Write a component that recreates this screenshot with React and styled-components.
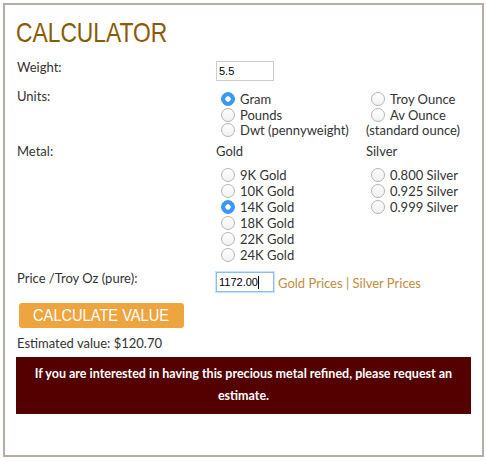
import styled, { createGlobalStyle } from "styled-components";

const COLOR = {
  text: "#333333",
  title: "#8b5a05",
  frame: "#b8ada3",
  link: "#c48b3d",
  button: "#eea53f",
  notice: "#540000",
  radioBlue: "#3a97f5",
};

const GlobalStyle = createGlobalStyle`
  body {
    margin: 0;
    background: #ffffff;
    font-family: Lato, "Open Sans", sans-serif;
    font-size: 13px;
    color: ${COLOR.text};
  }
`;

const SFrame = styled.div`
  box-sizing: border-box;
  width: 481px;
  height: 454px;
  margin: 3px 0 0 3px;
  border: 2px solid ${COLOR.frame};
  padding: 12px 11px 0 11px;
  overflow: hidden;
`;

const STitle = styled.h1`
  margin: 0 0 10px 0;
  font-family: "Liberation Sans", Arial, sans-serif;
  font-weight: normal;
  font-size: 28px;
  line-height: 32px;
  color: ${COLOR.title};
`;

const SNarrow = styled.span`
  display: inline-block;
  transform: scaleX(${(p) => p.$scale});
  transform-origin: ${(p) => p.$origin || "left"} center;
  white-space: nowrap;
`;

const SRow = styled.div`
  display: grid;
  grid-template-columns: 200px 1fr;
  margin-bottom: ${(p) => p.$gap || 0}px;
`;

const SLabel = styled.div`
  line-height: 16px;
  padding-left: 1px;
`;

const SValue = styled.div`
  padding-top: ${(p) => p.$offset || 0}px;
  display: ${(p) => (p.$flex ? "flex" : "block")};
  align-items: center;
`;

const SColumns = styled.div`
  display: grid;
  grid-template-columns: 150px 150px;
`;

const SColumnHead = styled.div`
  line-height: 16px;
  margin-bottom: 8px;
`;

const SOption = styled.label`
  display: flex;
  align-items: center;
  height: ${(p) => p.$h || 16}px;
  line-height: 16px;
`;

const SRadio = styled.input.attrs({ type: "radio" })`
  appearance: none;
  box-sizing: border-box;
  width: 14px;
  height: 14px;
  margin: 0 5px 0 5px;
  border-radius: 50%;
  border: 1px solid #b4b4b4;
  background: linear-gradient(#ffffff, #f1f1f1);
  flex: none;
  &:checked {
    border-color: ${COLOR.radioBlue};
    background: radial-gradient(circle, #ffffff 0 2.4px, ${COLOR.radioBlue} 3px);
  }
`;

const SPlain = styled.div`
  line-height: 16px;
`;

const SInputWrap = styled.span`
  position: relative;
  display: inline-block;
  margin-top: 2px;
`;

const STextInput = styled.input`
  display: block;
  box-sizing: border-box;
  width: 58px;
  height: 20px;
  margin: 0;
  padding: 0 2px;
  border: 1px solid ${(p) => (p.$focus ? "#8fbde8" : "#cccccc")};
  box-shadow: ${(p) => (p.$focus ? "0 0 1px 1px #cfe3f6" : "none")};
  font-family: "Liberation Sans", Arial, sans-serif;
  font-size: 11px;
  color: #000;
  outline: none;
`;

const SCaret = styled.span`
  position: absolute;
  left: ${(p) => p.$left}px;
  top: 4px;
  width: 1px;
  height: 13px;
  background: #000;
`;

const SLinks = styled.span`
  margin-left: 4px;
  margin-top: 4px;
  color: ${COLOR.link};
  a {
    color: ${COLOR.link};
    text-decoration: none;
  }
`;

const SButton = styled.button`
  display: flex;
  justify-content: center;
  align-items: center;
  box-sizing: border-box;
  width: 165px;
  height: 25px;
  margin: 0 0 7px 3px;
  padding: 1px 0 0 0;
  border: 0;
  border-radius: 3px;
  background: ${COLOR.button};
  color: #ffffff;
  font-family: "Liberation Sans", Arial, sans-serif;
  font-size: 17px;
  cursor: pointer;
`;

const SEstimate = styled.div`
  line-height: 16px;
  padding-left: 1px;
  margin-bottom: 6px;
`;

const SNotice = styled.div`
  background: ${COLOR.notice};
  color: #ffffff;
  font-weight: bold;
  font-size: 12.5px;
  text-align: center;
  line-height: 22px;
  padding: 6px 10px 7px;
`;

const units = [
  [
    { label: "Gram", checked: true },
    { label: "Pounds" },
    { label: "Dwt (pennyweight)" },
  ],
  [{ label: "Troy Ounce" }, { label: "Av Ounce" }],
];

const gold = ["9K Gold", "10K Gold", "14K Gold", "18K Gold", "22K Gold", "24K Gold"];
const silver = ["0.800 Silver", "0.925 Silver", "0.999 Silver"];

const Option = ({ name, label, checked, h }) => (
  <SOption $h={h}>
    <SRadio name={name} defaultChecked={checked} />
    {label}
  </SOption>
);

const App = () => {
  return (
    <>
      <GlobalStyle />
      <SFrame>
        <STitle>
          <SNarrow $scale={0.815}>CALCULATOR</SNarrow>
        </STitle>

        <SRow $gap={7}>
          <SLabel>Weight:</SLabel>
          <SValue>
            <SInputWrap>
              <STextInput type="text" defaultValue="5.5" />
            </SInputWrap>
          </SValue>
        </SRow>

        <SRow $gap={5}>
          <SLabel>Units:</SLabel>
          <SValue $offset={3}>
            <SColumns>
              <div>
                {units[0].map((u) => (
                  <Option key={u.label} name="units" h={15.7} {...u} />
                ))}
              </div>
              <div>
                {units[1].map((u) => (
                  <Option key={u.label} name="units" h={15.7} {...u} />
                ))}
                <SPlain>(standard ounce)</SPlain>
              </div>
            </SColumns>
          </SValue>
        </SRow>

        <SRow $gap={7}>
          <SLabel>Metal:</SLabel>
          <SValue>
            <SColumns>
              <div>
                <SColumnHead>Gold</SColumnHead>
                {gold.map((g) => (
                  <Option key={g} name="metal" label={g} checked={g === "14K Gold"} />
                ))}
              </div>
              <div>
                <SColumnHead>Silver</SColumnHead>
                {silver.map((s) => (
                  <Option key={s} name="metal" label={s} />
                ))}
              </div>
            </SColumns>
          </SValue>
        </SRow>

        <SRow $gap={11}>
          <SLabel>Price /Troy Oz (pure):</SLabel>
          <SValue $flex>
            <SInputWrap>
              <STextInput type="text" defaultValue="1172.00" $focus />
              <SCaret $left={42} />
            </SInputWrap>
            <SLinks>
              <a href="#">Gold Prices</a> | <a href="#">Silver Prices</a>
            </SLinks>
          </SValue>
        </SRow>

        <SButton>
          <SNarrow $scale={0.86} $origin="center">CALCULATE VALUE</SNarrow>
        </SButton>
        <SEstimate>Estimated value: $120.70</SEstimate>
        <SNotice>
          If you are interested in having this precious metal refined, please
          request an estimate.
        </SNotice>
      </SFrame>
    </>
  );
};

export default App;
